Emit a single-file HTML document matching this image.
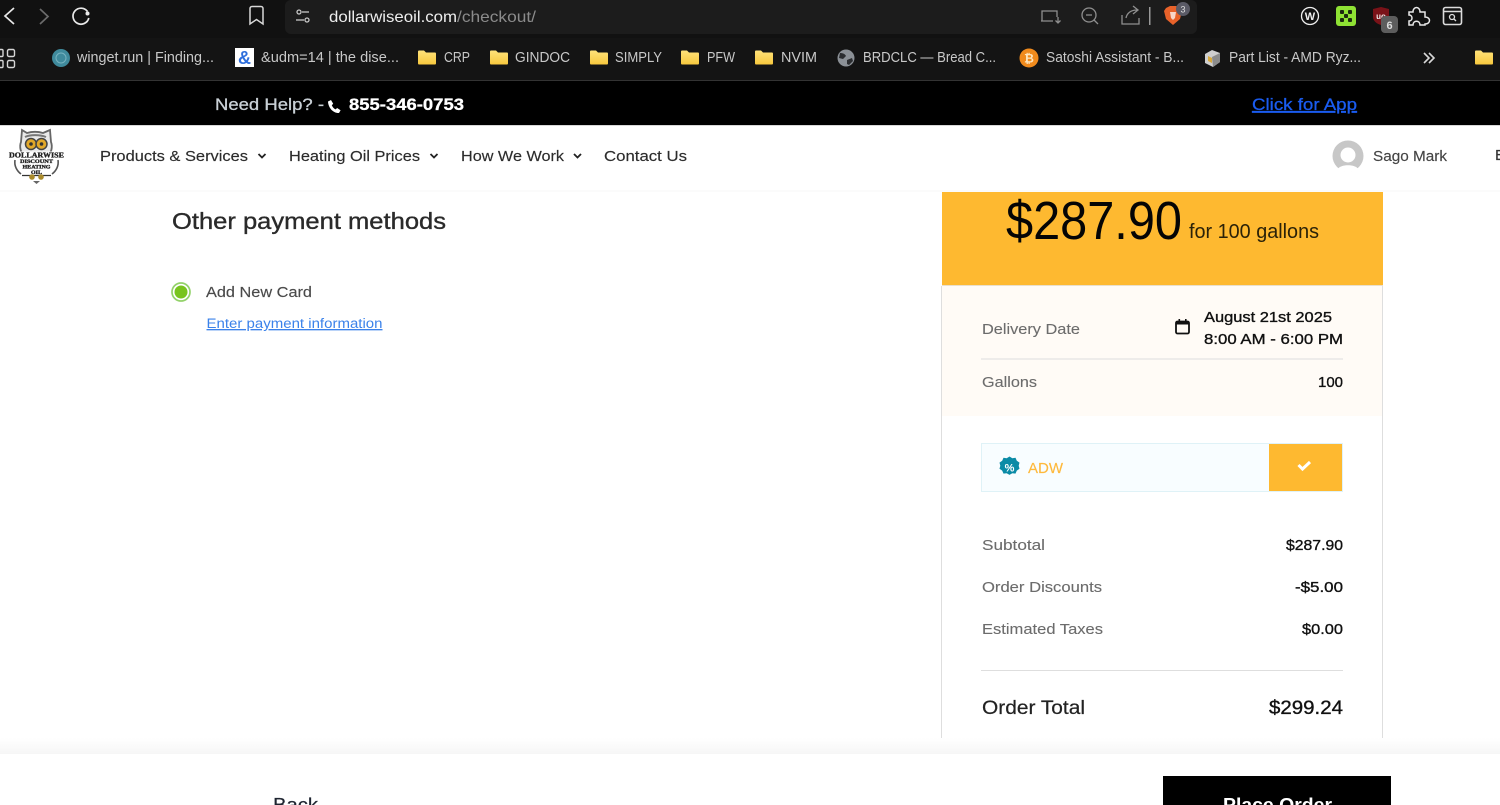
<!DOCTYPE html>
<html>
<head>
<meta charset="utf-8">
<title>Checkout</title>
<style>
html,body{margin:0;padding:0;width:1500px;height:805px;overflow:hidden;background:#fff}
svg{display:block;position:absolute;left:0;top:0;filter:blur(.35px)}
text{font-family:"Liberation Sans",sans-serif;white-space:pre}
.bm{font-size:14.500px;fill:#c8c8c8}
.nav{font-size:15px;fill:#2c2c2c;stroke:#2c2c2c;stroke-width:.15px}
.lab{font-size:15px;fill:#6c6c6c;stroke:#6c6c6c;stroke-width:.12px}
.val{font-size:15px;fill:#111;stroke:#111;stroke-width:.35px}
</style>
</head>
<body>
<svg width="1500" height="805" viewBox="0 0 1500 805" xmlns="http://www.w3.org/2000/svg">
<defs>
<linearGradient id="fold" x1="0" y1="0" x2="0" y2="1"><stop offset="0" stop-color="#ffe27a"/><stop offset="1" stop-color="#f7c83e"/></linearGradient>
<linearGradient id="foot" x1="0" y1="0" x2="0" y2="1"><stop offset="0" stop-color="#ffffff"/><stop offset="1" stop-color="#f6f6f6"/></linearGradient>
<g id="folder"><path d="M0 2.500a1 1 0 0 1 1-1h5l2 2h9a1 1 0 0 1 1 1v10a1 1 0 0 1-1 1H1a1 1 0 0 1-1-1z" fill="url(#fold)"/></g>
</defs>

<!-- browser chrome -->
<rect x="0" y="0" width="1500" height="81" fill="#111111"/>
<rect x="0" y="38" width="1500" height="42" fill="#141414"/>
<rect x="285" y="0" width="912" height="34" rx="6" fill="#1c1c1c"/>
<rect x="0" y="80" width="1500" height="1" fill="#333"/>

<path d="M14 8 5 16l9 8" fill="none" stroke="#e8e8e8" stroke-width="1.700"/>
<path d="m40 9 8 7.500-8 7.500" fill="none" stroke="#6b6b6b" stroke-width="1.700"/>
<path d="M87.500 11.500A8 8 0 1 0 88.800 18" fill="none" stroke="#e8e8e8" stroke-width="1.700"/>
<circle cx="87.500" cy="13.500" r="2" fill="#e8e8e8"/>
<path d="M250 8.500a2 2 0 0 1 2-2h9a2 2 0 0 1 2 2V24l-6.500-4.500L250 24z" fill="none" stroke="#d8d8d8" stroke-width="1.500"/>
<g fill="none" stroke="#c8c8c8" stroke-width="1.300">
<circle cx="299" cy="12" r="2"/><path d="M302 12h7"/>
<circle cx="307" cy="20" r="2"/><path d="M296 20h8"/>
</g>
<text x="329" y="22" font-size="16" fill="#eeeeee" textLength="128" lengthAdjust="spacingAndGlyphs">dollarwiseoil.com</text>
<text x="457" y="22" font-size="16" fill="#8b8b8b" textLength="79" lengthAdjust="spacingAndGlyphs">/checkout/</text>

<g fill="none" stroke="#8f8f8f" stroke-width="1.300">
<path d="M1042 21V11h15v6M1041 21h12"/><path d="M1058 17v6m-2.500-2.500 2.500 2.500 2.500-2.500"/>
<circle cx="1089" cy="15" r="7"/><path d="M1086 15h6M1094 20l4 4"/>
<path d="M1122 15v9h17v-6M1126 18c1-5 5-8 11-8M1133 6l5 4-5 4"/>
</g>
<rect x="1149" y="7" width="1.500" height="18" fill="#999"/>
<path d="M1166 8l4-2h6l4 2 2 3-2 8-7 6-7-6-2-8z" fill="#e8622a"/>
<path d="M1170 12h6l-1 6-2 2-2-2z" fill="#fff" opacity=".75"/>
<circle cx="1183" cy="9" r="7" fill="#5a5a66"/>
<text x="1183" y="12.500" font-size="9" fill="#ddd" text-anchor="middle">3</text>

<circle cx="1310" cy="16" r="8.500" fill="#111" stroke="#eee" stroke-width="1.300"/>
<text x="1310" y="20" font-size="11" font-weight="700" fill="#eee" text-anchor="middle">W</text>
<rect x="1336" y="6" width="20" height="20" rx="3" fill="#8fe234"/>
<g fill="#1c2a10"><rect x="1340" y="10" width="4" height="4" rx="1"/><rect x="1348" y="10" width="4" height="4" rx="1"/><rect x="1344" y="14" width="4" height="4" rx="1"/><rect x="1340" y="18" width="4" height="4" rx="1"/><rect x="1348" y="18" width="4" height="4" rx="1"/></g>
<path d="M1373 9l8-2 8 2v8c0 4-4 7-8 8-4-1-8-4-8-8z" fill="#7a1218"/>
<text x="1381" y="19" font-size="8" font-weight="700" fill="#eee" text-anchor="middle">uo</text>
<rect x="1381" y="16" width="17" height="17" rx="4" fill="#5d5d5d"/>
<text x="1389.500" y="29" font-size="11" font-weight="700" fill="#ddd" text-anchor="middle">6</text>
<path d="M1409 12h4c0-6 7-6 7 0h5v5c6 0 6 7 0 7v1h-5c0-5-7-5-7 0h-4v-4c4 0 4-6 0-6z" fill="none" stroke="#e8e8e8" stroke-width="1.500"/>
<rect x="1443.500" y="7.500" width="18" height="17" rx="2" fill="none" stroke="#dcdcdc" stroke-width="1.600"/>
<path d="M1444 11.500h17" stroke="#dcdcdc" stroke-width="1.400"/>
<circle cx="1452" cy="17" r="2.500" fill="none" stroke="#dcdcdc" stroke-width="1.300"/><path d="m1454 19 2 2" stroke="#dcdcdc" stroke-width="1.300"/>

<!-- bookmarks bar -->
<g fill="none" stroke="#d6d6d6" stroke-width="1.400">
<path d="M-4 49.500h6a1 1 0 0 1 1 1v5a1 1 0 0 1-1 1h-6z"/><rect x="7.500" y="49.500" width="7" height="7" rx="1.500"/>
<path d="M-4 60.500h6a1 1 0 0 1 1 1v5a1 1 0 0 1-1 1h-6z"/><rect x="7.500" y="60.500" width="7" height="7" rx="1.500"/>
</g>
<circle cx="61" cy="58" r="9" fill="#3f8a9c"/><circle cx="61" cy="58" r="5" fill="none" stroke="#77b3c0" stroke-width="1"/>
<text class="bm" x="77" y="62" textLength="137" lengthAdjust="spacingAndGlyphs">winget.run | Finding...</text>
<rect x="235" y="48" width="19" height="19" fill="#fff"/>
<text x="244.500" y="64" font-size="18" font-weight="700" fill="#2f6fdc" text-anchor="middle">&amp;</text>
<text class="bm" x="261" y="62" textLength="138" lengthAdjust="spacingAndGlyphs">&amp;udm=14 | the dise...</text>
<use href="#folder" x="418" y="49"/>
<text class="bm" x="444" y="62" textLength="26" lengthAdjust="spacingAndGlyphs">CRP</text>
<use href="#folder" x="490" y="49"/>
<text class="bm" x="515" y="62" textLength="55" lengthAdjust="spacingAndGlyphs">GINDOC</text>
<use href="#folder" x="590" y="49"/>
<text class="bm" x="615" y="62" textLength="47" lengthAdjust="spacingAndGlyphs">SIMPLY</text>
<use href="#folder" x="681" y="49"/>
<text class="bm" x="707" y="62" textLength="28" lengthAdjust="spacingAndGlyphs">PFW</text>
<use href="#folder" x="755" y="49"/>
<text class="bm" x="781" y="62" textLength="36" lengthAdjust="spacingAndGlyphs">NVIM</text>
<circle cx="846" cy="58" r="8.500" fill="#8b9096"/>
<path d="M840 53c3 0 5 1 6 3l-3 3-4-1zM847 60l5-2 1 3-4 4-2-1z" fill="#2b2d30"/>
<text class="bm" x="863" y="62" textLength="133" lengthAdjust="spacingAndGlyphs">BRDCLC — Bread C...</text>
<circle cx="1029" cy="58" r="9.500" fill="#f08a1c"/>
<text x="1029" y="62.500" font-size="12" font-weight="700" fill="#fde6c0" text-anchor="middle">₿</text>
<text class="bm" x="1046" y="62" textLength="138" lengthAdjust="spacingAndGlyphs">Satoshi Assistant - B...</text>
<path d="M1205 54l7-4 8 3v9l-7 5-8-4z" fill="#cfcfcf"/><path d="M1212 57l8-4v9l-7 5z" fill="#8c8c8c"/><path d="M1208 56l4 2v5l-4-2z" fill="#d8a93c"/>
<text class="bm" x="1229" y="62" textLength="132" lengthAdjust="spacingAndGlyphs">Part List - AMD Ryz...</text>
<path d="m1424 53 5 5-5 5M1429 53l5 5-5 5" fill="none" stroke="#d8d8d8" stroke-width="1.600"/>
<use href="#folder" x="1475" y="49"/>

<!-- help bar -->
<rect x="0" y="81" width="1500" height="44" fill="#000"/>
<text x="215" y="110" font-size="17" fill="#c9d0d6" textLength="109" lengthAdjust="spacingAndGlyphs" stroke="#c9d0d6" stroke-width=".3">Need Help? -</text>
<path d="M328 101.500l3-1.500 2.200 3.800-1.400 1.400c.7 1.800 2.100 3.400 3.900 4.200l1.400-1.400 3.500 2.200-1.600 2.800c-6 .3-10.800-5.500-11-11.500z" fill="#fff"/>
<text x="349" y="110" font-size="17" font-weight="700" fill="#fff" textLength="115" lengthAdjust="spacingAndGlyphs" stroke="#fff" stroke-width=".3">855-346-0753</text>
<text x="1252" y="110" font-size="17" fill="#1a5cf0" textLength="105" lengthAdjust="spacingAndGlyphs" stroke="#1a5cf0" stroke-width=".3" text-decoration="underline">Click for App</text>

<!-- nav -->
<rect x="0" y="125" width="1500" height="65" fill="#fff"/>
<rect x="0" y="125" width="1500" height="1" fill="#d8d8d8"/>
<!-- owl logo -->
<g>
<path d="M22 130l5 3c5-1.500 11-1.500 16 0l7-3 1 12c2 5 0 11-3 15H24c-3-4-5-10-3-15z" fill="#e9e9e9" stroke="#666" stroke-width="1.800"/>
<path d="M25 137c5-2.500 15-2.500 21 0" fill="none" stroke="#777" stroke-width="2"/>
<circle cx="31" cy="144" r="5.500" fill="#e2a829" stroke="#444" stroke-width="1.500"/><circle cx="41.500" cy="144" r="5.500" fill="#e2a829" stroke="#444" stroke-width="1.500"/>
<circle cx="31" cy="144" r="1.800" fill="#333"/><circle cx="41.500" cy="144" r="1.800" fill="#333"/>
<rect x="9" y="151.500" width="55" height="7" fill="#fff"/>
<g style="font-family:'Liberation Serif',serif" font-weight="700" fill="#222" stroke="#222" stroke-width=".35" text-anchor="middle">
<text x="36.500" y="157.500" font-size="7" textLength="55" lengthAdjust="spacingAndGlyphs" style="font-family:'Liberation Serif',serif">DOLLARWISE</text>
<text x="36.500" y="163" font-size="5.500" textLength="33" lengthAdjust="spacingAndGlyphs" style="font-family:'Liberation Serif',serif">DISCOUNT</text>
<text x="36.500" y="168.500" font-size="5.500" textLength="28" lengthAdjust="spacingAndGlyphs" style="font-family:'Liberation Serif',serif">HEATING</text>
<text x="36.500" y="174" font-size="5" textLength="11" lengthAdjust="spacingAndGlyphs" style="font-family:'Liberation Serif',serif">OIL</text>
</g>
<path d="M15 160c-1 6 2 11 6 14M58 160c1 6-2 11-6 14" fill="none" stroke="#555" stroke-width="1.600"/>
<path d="M22 175.500h29" stroke="#333" stroke-width="1.200"/>
<circle cx="32" cy="177" r="2.800" fill="#a98a2a"/><circle cx="41" cy="177" r="2.800" fill="#a98a2a"/>
<path d="M33 181h7l-3.500 3z" fill="#666"/>
</g>
<text class="nav" x="100" y="161" textLength="148" lengthAdjust="spacingAndGlyphs">Products &amp; Services</text>
<path d="m258.500 154 3.500 3.500 3.500-3.500" fill="none" stroke="#222" stroke-width="1.800"/>
<text class="nav" x="289" y="161" textLength="131" lengthAdjust="spacingAndGlyphs">Heating Oil Prices</text>
<path d="m430.500 154 3.500 3.500 3.500-3.500" fill="none" stroke="#222" stroke-width="1.800"/>
<text class="nav" x="461" y="161" textLength="103" lengthAdjust="spacingAndGlyphs">How We Work</text>
<path d="m574 154 3.500 3.500 3.500-3.500" fill="none" stroke="#222" stroke-width="1.800"/>
<text class="nav" x="604" y="161" textLength="83" lengthAdjust="spacingAndGlyphs">Contact Us</text>
<circle cx="1348" cy="156" r="15.500" fill="#c7c7c7"/>
<circle cx="1348" cy="155" r="7.500" fill="#fff"/>
<path d="M1338 169c2-5 18-5 20 0-5 3.500-15 3.500-20 0z" fill="#fff"/>
<text class="nav" x="1373" y="161" textLength="74" lengthAdjust="spacingAndGlyphs" style="fill:#444;stroke:#444">Sago Mark</text>
<text class="nav" x="1495" y="160" style="fill:#333">E</text>
<rect x="0" y="190" width="1500" height="2" fill="#fbfbfb"/>

<!-- left -->
<text x="172" y="229" font-size="23" fill="#2a2a2a" textLength="274" lengthAdjust="spacingAndGlyphs" stroke="#2a2a2a" stroke-width=".35">Other payment methods</text>
<circle cx="181" cy="292" r="9" fill="#fff" stroke="#93d26a" stroke-width="1.700"/>
<circle cx="181" cy="292" r="6.500" fill="#78c41e"/>
<text x="206" y="297" font-size="15" fill="#4a4a4a" stroke="#4a4a4a" stroke-width=".15" textLength="106" lengthAdjust="spacingAndGlyphs">Add New Card</text>
<text x="206.500" y="328" font-size="13.500" fill="#3b82ea" textLength="176" lengthAdjust="spacingAndGlyphs" text-decoration="underline">Enter payment information</text>

<!-- summary -->
<rect x="942" y="286" width="440" height="452" fill="#fff"/>
<rect x="942" y="286" width="440" height="130" fill="#fffbf6"/>
<rect x="941" y="286" width="1" height="452" fill="#dedede"/>
<rect x="1382" y="286" width="1" height="452" fill="#dedede"/>
<rect x="942" y="192" width="441" height="93" fill="#feb930"/>
<rect x="942" y="285" width="441" height="1" fill="#eadfcb"/>
<text x="1006" y="239" font-size="54" fill="#050505" textLength="176" lengthAdjust="spacingAndGlyphs">$287.90</text>
<text x="1189" y="238" font-size="20" fill="#2b2208" textLength="130" lengthAdjust="spacingAndGlyphs">for 100 gallons</text>

<text class="lab" x="982" y="334" textLength="98" lengthAdjust="spacingAndGlyphs">Delivery Date</text>
<rect x="1176" y="321.500" width="13" height="12" rx="1.500" fill="none" stroke="#111" stroke-width="1.800"/>
<rect x="1176" y="321" width="13" height="3.500" fill="#111"/>
<rect x="1178.500" y="319" width="1.600" height="3" fill="#111"/><rect x="1185" y="319" width="1.600" height="3" fill="#111"/>
<text class="val" x="1204" y="322" textLength="128" lengthAdjust="spacingAndGlyphs">August 21st 2025</text>
<text class="val" x="1204" y="344" textLength="139" lengthAdjust="spacingAndGlyphs">8:00 AM - 6:00 PM</text>
<rect x="981" y="358.500" width="362" height="1" fill="#dedede"/>
<text class="lab" x="982" y="387" textLength="55" lengthAdjust="spacingAndGlyphs">Gallons</text>
<text class="val" x="1318" y="387" textLength="25" lengthAdjust="spacingAndGlyphs">100</text>

<rect x="981.500" y="443.500" width="361" height="48" fill="#f8fdff" stroke="#dff2f7"/>
<rect x="1269" y="444" width="73" height="47" fill="#feb930"/>
<path d="m1298.500 465 4 4 7.500-7" fill="none" stroke="#fff" stroke-width="3"/>
<path d="M1009.500 456.500l2.800 1.700 3.200-.4 1.300 3 2.700 1.800-.8 3.100.8 3.100-2.700 1.800-1.300 3-3.200-.4-2.800 1.700-2.800-1.700-3.200.4-1.300-3-2.700-1.800.8-3.100-.8-3.100 2.700-1.800 1.300-3 3.200.4z" fill="#0b8ba6"/>
<text x="1009.500" y="471.500" font-size="11" font-weight="700" fill="#fff" text-anchor="middle">%</text>
<text x="1028" y="473" font-size="15" fill="#feb93c" stroke="#feb93c" stroke-width=".15" textLength="35" lengthAdjust="spacingAndGlyphs">ADW</text>

<text class="lab" x="982" y="550" textLength="63" lengthAdjust="spacingAndGlyphs">Subtotal</text>
<text class="val" x="1286" y="550" textLength="57" lengthAdjust="spacingAndGlyphs">$287.90</text>
<text class="lab" x="982" y="592" textLength="120" lengthAdjust="spacingAndGlyphs">Order Discounts</text>
<text class="val" x="1295" y="592" textLength="48" lengthAdjust="spacingAndGlyphs">-$5.00</text>
<text class="lab" x="982" y="634" textLength="121" lengthAdjust="spacingAndGlyphs">Estimated Taxes</text>
<text class="val" x="1302" y="634" textLength="41" lengthAdjust="spacingAndGlyphs">$0.00</text>
<rect x="981" y="670" width="362" height="1" fill="#dedede"/>
<text x="982" y="714" font-size="19" fill="#222" stroke="#222" stroke-width=".2" textLength="103" lengthAdjust="spacingAndGlyphs">Order Total</text>
<text x="1269" y="714" font-size="19" fill="#111" textLength="74" lengthAdjust="spacingAndGlyphs" stroke="#111" stroke-width=".35">$299.24</text>

<!-- footer -->
<rect x="0" y="738" width="1500" height="16" fill="url(#foot)"/>
<rect x="0" y="754" width="1500" height="51" fill="#fff"/>
<text x="273" y="811" font-size="18" fill="#1e2430" stroke="#1e2430" stroke-width=".2" textLength="45" lengthAdjust="spacingAndGlyphs">Back</text>
<rect x="1163" y="776" width="228" height="29" fill="#000"/>
<text x="1223" y="811" font-size="18" font-weight="700" fill="#fff" textLength="109" lengthAdjust="spacingAndGlyphs">Place Order</text>
</svg>
</body>
</html>
